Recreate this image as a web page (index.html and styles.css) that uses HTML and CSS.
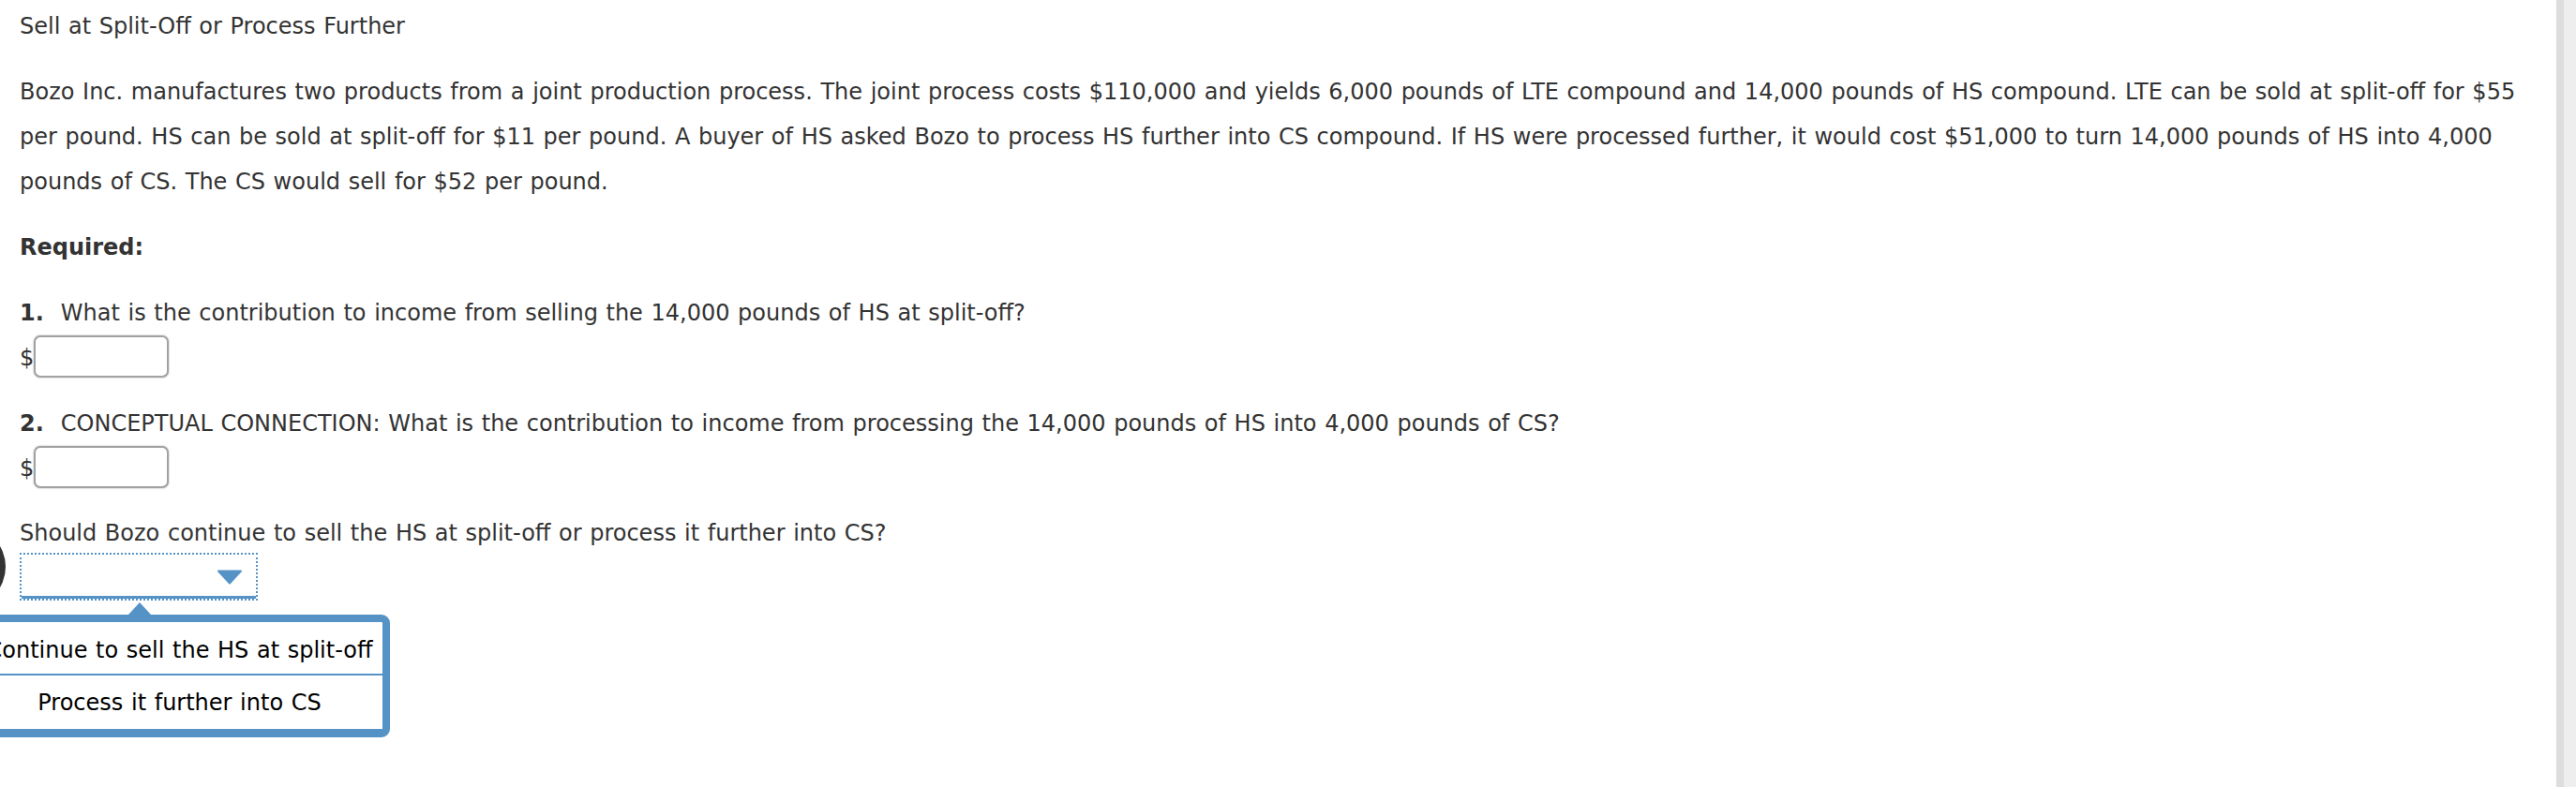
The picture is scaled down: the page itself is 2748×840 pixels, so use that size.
FILE: index.html
```html
<!DOCTYPE html>
<html lang="en">
<head>
<meta charset="utf-8">
<title>Sell at Split-Off or Process Further</title>
<link rel="stylesheet" href="styles.css">
</head>
<body>
<div class="page">
  <main class="content">
    <h1 class="title">Sell at Split-Off or Process Further</h1>
    <p class="intro">Bozo Inc. manufactures two products from a joint production process. The joint process costs $110,000 and yields 6,000 pounds of LTE compound and 14,000 pounds of HS compound. LTE can be sold at split-off for $55<br>per pound. HS can be sold at split-off for $11 per pound. A buyer of HS asked Bozo to process HS further into CS compound. If HS were processed further, it would cost $51,000 to turn 14,000 pounds of HS into 4,000<br>pounds of CS. The CS would sell for $52 per pound.</p>
    <p class="required">Required:</p>

    <p class="question"><span class="num">1.</span>What is the contribution to income from selling the 14,000 pounds of HS at split-off?</p>
    <div class="answer"><span class="currency">$</span><span class="field"></span></div>

    <p class="question"><span class="num">2.</span>CONCEPTUAL CONNECTION: What is the contribution to income from processing the 14,000 pounds of HS into 4,000 pounds of CS?</p>
    <div class="answer"><span class="currency">$</span><span class="field"></span></div>

    <p class="prompt">Should Bozo continue to sell the HS at split-off or process it further into CS?</p>
    <div class="select-wrap">
      <span class="dark-circle"></span>
      <div class="select">
        <svg class="caret" width="28" height="16" viewBox="0 0 28 16"><path d="M2 1.5 H26 L14 14.5 Z" fill="#5593c7" stroke="#5593c7" stroke-width="2" stroke-linejoin="round"/></svg>
      </div>
      <div class="menu">
        <div class="menu-item first">Continue to sell the HS at split-off</div>
        <div class="menu-item second">Process it further into CS</div>
      </div>
    </div>
  </main>
  <aside class="scrollbar"></aside>
</div>
</body>
</html>
```

FILE: styles.css
```css
html, body {
  margin: 0;
  padding: 0;
  height: 100%;
  background: #ffffff;
  overflow: hidden;
}

.page {
  display: flex;
  height: 840px;
}

.content {
  flex: 1;
  min-width: 0;
  padding: 4px 0 0 21px;
  font-family: "DejaVu Sans", Verdana, sans-serif;
  font-size: 24px;
  line-height: 48px;
  color: #333333;
  word-spacing: 1px;
}

.title {
  margin: 0;
  font-size: 24px;
  font-weight: normal;
  line-height: 48px;
}

.intro {
  margin: 22px 0 0;
  white-space: nowrap;
}

.required {
  margin: 22px 0 0;
  font-weight: bold;
}

.question {
  margin: 22px 0 0;
  white-space: nowrap;
}

.num {
  font-weight: bold;
  margin-right: 18px;
}

.answer {
  display: flex;
  align-items: flex-start;
  height: 48px;
}

.currency {
  line-height: 48px;
}

.field {
  display: block;
  width: 140px;
  height: 41px;
  border: 2px solid #a2a2a2;
  border-radius: 7px;
  background: #ffffff;
  box-shadow: 0 0 2px rgba(0, 0, 0, 0.35);
}

.prompt {
  margin: 27px 0 0;
  line-height: 36px;
}

.select-wrap {
  position: relative;
  margin-top: 3px;
  width: 254px;
}

.select {
  box-sizing: border-box;
  width: 254px;
  height: 51px;
  border: 2px dotted #5593c7;
  box-shadow: inset 0 -3px 0 #5593c7;
  background: #ffffff;
  display: flex;
  align-items: center;
  justify-content: flex-end;
  padding-right: 14px;
}

.caret {
  display: block;
}

.dark-circle {
  position: absolute;
  left: -101px;
  top: -28px;
  width: 86px;
  height: 86px;
  border-radius: 50%;
  background: #333333;
}

.menu {
  position: absolute;
  left: -54px;
  top: 66px;
  width: 433px;
  border: 8px solid #5593c7;
  border-bottom-width: 9px;
  border-radius: 9px;
  background: #ffffff;
  color: #000000;
  text-align: center;
  z-index: 2;
}

.menu::before {
  content: "";
  position: absolute;
  top: -21px;
  left: 162px;
  width: 0;
  height: 0;
  border-left: 12px solid transparent;
  border-right: 12px solid transparent;
  border-bottom: 13px solid #5593c7;
}

.menu-item {
  line-height: 48px;
  white-space: nowrap;
}

.menu-item.first {
  padding: 6px 0 1px;
  border-bottom: 2px solid #5593c7;
}

.menu-item.second {
  padding: 5px 0 4px;
}

.scrollbar {
  flex: 0 0 21px;
  background: linear-gradient(to right, #dddddd 0, #dddddd 8px, #eeeeee 8px, #eeeeee 100%);
}
```
